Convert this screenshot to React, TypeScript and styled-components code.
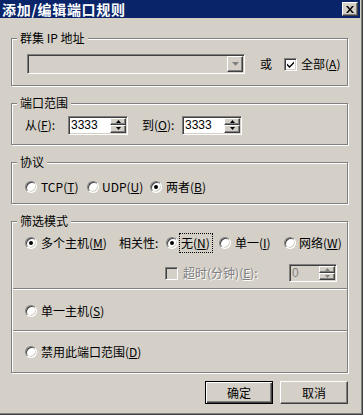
import styled, { createGlobalStyle } from "styled-components";

const face = "#d4d0c8";

const GlobalStyle = createGlobalStyle`
  body {
    margin: 0;
    background: ${face};
    font-family: "Noto Sans CJK SC", "Liberation Sans", sans-serif;
    font-size: 12px;
    color: #000;
  }
`;

const Window = styled.div`
  width: 363px;
  height: 415px;
  box-sizing: border-box;
  background: ${face};
  border-right: 1px solid #404040;
  border-bottom: 1px solid #404040;
  box-shadow: inset -1px -1px 0 #808080;
  display: flex;
  flex-direction: column;
`;

const TitleBar = styled.div`
  height: 18px;
  width: 360px;
  background: #0a246a;
  display: flex;
  align-items: center;
  justify-content: space-between;
  padding: 0 2px 0 2px;
  box-sizing: border-box;
`;

const Title = styled.span`
  color: #fff;
  font-weight: bold;
  font-size: 14px;
  line-height: 18px;
  letter-spacing: 0.7px;
`;

const CloseButton = styled.div`
  width: 16px;
  height: 14px;
  box-sizing: border-box;
  background: ${face};
  border: 1px solid;
  border-color: #fff #404040 #404040 #fff;
  box-shadow: inset -1px -1px 0 #808080;
  display: flex;
  align-items: center;
  justify-content: center;
`;

const Body = styled.div`
  padding: 20px 14px 0 11px;
  display: flex;
  flex-direction: column;
  gap: 17px;
`;

const Group = styled.div<{ $h: number }>`
  position: relative;
  height: ${(p) => p.$h}px;
  box-sizing: border-box;
  border: 1px solid #808080;
  box-shadow: inset 1px 1px 0 #fff, 1px 1px 0 #fff;
`;

const Legend = styled.span`
  position: absolute;
  top: -8px;
  left: 5px;
  padding: 0 3px;
  background: ${face};
  line-height: 14px;
`;

const Row = styled.div<{ $top?: number; $left?: number }>`
  display: flex;
  align-items: center;
  padding-top: ${(p) => p.$top ?? 0}px;
  padding-left: ${(p) => p.$left ?? 13}px;
  height: 20px;
`;

const Sunken = styled.div<{ $w: number; $h: number; $bg?: string }>`
  width: ${(p) => p.$w}px;
  height: ${(p) => p.$h}px;
  box-sizing: border-box;
  border: 1px solid;
  border-color: #808080 #fff #fff #808080;
  box-shadow: inset 1px 1px 0 #404040, inset -1px -1px 0 ${face};
  background: ${(p) => p.$bg ?? "#fff"};
  display: flex;
  align-items: stretch;
  padding: 1px;
`;

const FieldText = styled.span<{ $disabled?: boolean }>`
  flex: 1;
  font-family: "Liberation Sans", Arial, sans-serif;
  font-size: 12px;
  line-height: 14px;
  padding-left: 1px;
  color: ${(p) => (p.$disabled ? "#808080" : "#000")};
`;

const RaisedBox = styled.div<{ $w: number }>`
  width: ${(p) => p.$w}px;
  box-sizing: border-box;
  background: ${face};
  border: 1px solid;
  border-color: #fff #404040 #404040 #fff;
  box-shadow: inset -1px -1px 0 #808080;
  display: flex;
  align-items: center;
  justify-content: center;
`;

const SpinCol = styled.div`
  display: flex;
  flex-direction: column;
  width: 16px;
`;

const SpinHalf = styled(RaisedBox)`
  flex: 1;
`;

const Label = styled.span<{ $w?: number; $ml?: number; $disabled?: boolean }>`
  display: inline-block;
  width: ${(p) => (p.$w ? `${p.$w}px` : "auto")};
  margin-left: ${(p) => p.$ml ?? 0}px;
  white-space: nowrap;
  line-height: 14px;
  flex-shrink: 0;
  color: ${(p) => (p.$disabled ? "#808080" : "#000")};
  text-shadow: ${(p) => (p.$disabled ? "1px 1px 0 #fff" : "none")};
`;

const Focus = styled.span`
  display: inline-block;
  width: 31px;
  margin-right: 7px;
  outline: 1px dotted #000;
  padding: 2px 0 2px 1px;
  line-height: 14px;
  white-space: nowrap;
`;

const RadioCircle = styled.span<{ $mr?: number }>`
  width: 12px;
  height: 12px;
  box-sizing: border-box;
  margin-right: ${(p) => p.$mr ?? 4}px;
  border-radius: 50%;
  border: 1px solid;
  border-color: #808080 #fff #fff #808080;
  box-shadow: inset 1px 1px 0 #404040, inset -1px -1px 0 ${face};
  background: #fff;
  display: flex;
  align-items: center;
  justify-content: center;
  flex-shrink: 0;
`;

const Dot = styled.span`
  width: 4px;
  height: 4px;
  border-radius: 50%;
  background: #000;
`;

const CheckBox = styled.span<{ $ml?: number; $disabled?: boolean }>`
  width: 13px;
  height: 13px;
  box-sizing: border-box;
  margin-left: ${(p) => p.$ml ?? 0}px;
  margin-right: ${(p) => (p.$disabled ? 5 : 4)}px;
  border: 1px solid;
  border-color: #808080 #fff #fff #808080;
  box-shadow: inset 1px 1px 0 #404040, inset -1px -1px 0 ${face};
  background: ${(p) => (p.$disabled ? face : "#fff")};
  display: flex;
  align-items: center;
  justify-content: center;
  flex-shrink: 0;
`;

const Section = styled.div<{ $h: number }>`
  height: ${(p) => p.$h}px;
  display: flex;
  flex-direction: column;
`;

const Divider = styled.div`
  height: 1px;
  background: #808080;
  border-bottom: 1px solid #fff;
  margin-left: 1px;
`;

const Buttons = styled.div`
  display: flex;
  justify-content: flex-end;
  gap: 7px;
  padding: 8px 14px 0 0;
`;

const Button = styled.div<{ $default?: boolean }>`
  width: 68px;
  height: 23px;
  box-sizing: border-box;
  background: ${face};
  border: 1px solid;
  border-color: ${(p) => (p.$default ? "#000" : "#fff #404040 #404040 #fff")};
  box-shadow: ${(p) =>
    p.$default
      ? "inset 1px 1px 0 #fff, inset -1px -1px 0 #404040, inset -2px -2px 0 #808080"
      : "inset -1px -1px 0 #808080"};
  display: flex;
  align-items: center;
  justify-content: center;
  font-size: 12px;
`;

const Radio = ({ on, mr }: { on?: boolean; mr?: number }) => (
  <RadioCircle $mr={mr}>{on && <Dot />}</RadioCircle>
);

const Acc = ({ k }: { k: string }) => (
  <>
    (<u>{k}</u>)
  </>
);

const Spinner = ({ w, h, value, disabled }: { w: number; h: number; value: string; disabled?: boolean }) => (
  <Sunken $w={w} $h={h} $bg={disabled ? face : "#fff"}>
    <FieldText $disabled={disabled}>{value}</FieldText>
    <SpinCol>
      <SpinHalf $w={16}>
        <svg width="5" height="3" viewBox="0 0 5 3">
          <path d="M2.5 0 L5 3 L0 3 Z" fill={disabled ? "#808080" : "#000"} />
        </svg>
      </SpinHalf>
      <SpinHalf $w={16}>
        <svg width="5" height="3" viewBox="0 0 5 3">
          <path d="M0 0 L5 0 L2.5 3 Z" fill={disabled ? "#808080" : "#000"} />
        </svg>
      </SpinHalf>
    </SpinCol>
  </Sunken>
);

export default function App() {
  return (
    <>
      <GlobalStyle />
      <Window>
        <TitleBar>
          <Title>添加/编辑端口规则</Title>
          <CloseButton>
            <svg width="8" height="7" viewBox="0 0 8 7">
              <path d="M0 0 L2 0 L4 2.5 L6 0 L8 0 L5 3.5 L8 7 L6 7 L4 4.5 L2 7 L0 7 L3 3.5 Z" fill="#000" />
            </svg>
          </CloseButton>
        </TitleBar>

        <Body>
          <Group $h={48}>
            <Legend>群集 IP 地址</Legend>
            <Row $top={15} $left={15}>
              <Sunken $w={218} $h={20} $bg={face}>
                <FieldText />
                <RaisedBox $w={16}>
                  <svg width="7" height="5" viewBox="0 0 7 5">
                    <path d="M1 1 L6 1 L3.5 4 Z" fill="#fff" />
                    <path d="M0 0 L7 0 L3.5 4 Z" fill="#808080" />
                  </svg>
                </RaisedBox>
              </Sunken>
              <Label $ml={15}>或</Label>
              <CheckBox $ml={12}>
                <svg width="9" height="9" viewBox="0 0 9 9">
                  <path d="M1 3.5 L3.5 6 L8 1.5 L8 3.5 L3.5 8 L1 5.5 Z" fill="#000" />
                </svg>
              </CheckBox>
              <Label>
                全部<Acc k="A" />
              </Label>
            </Row>
          </Group>

          <Group $h={42}>
            <Legend>端口范围</Legend>
            <Row $top={11}>
              <Label $w={43}>
                从<Acc k="F" />:
              </Label>
              <Spinner w={60} h={19} value="3333" />
              <Label $w={40} $ml={14}>
                到<Acc k="O" />:
              </Label>
              <Spinner w={60} h={19} value="3333" />
            </Row>
          </Group>

          <Group $h={42}>
            <Legend>协议</Legend>
            <Row $top={14}>
              <Radio />
              <Label $w={46}>
                TCP<Acc k="T" />
              </Label>
              <Radio mr={3} />
              <Label $w={48}>
                UDP<Acc k="U" />
              </Label>
              <Radio on />
              <Label>
                两者<Acc k="B" />
              </Label>
            </Row>
          </Group>

          <Group $h={152}>
            <Legend>筛选模式</Legend>
            <Section $h={66}>
              <Row $top={11}>
                <Radio on />
                <Label $w={78}>
                  多个主机<Acc k="M" />
                </Label>
                <Label $w={47}>相关性:</Label>
                <Radio on mr={2} />
                <Focus>
                  无<Acc k="N" />
                </Focus>
                <Radio />
                <Label $w={49}>
                  单一<Acc k="I" />
                </Label>
                <Radio mr={3} />
                <Label>
                  网络<Acc k="W" />
                </Label>
              </Row>
              <Row $top={10} $left={153}>
                <CheckBox $disabled />
                <Label $w={106} $disabled>
                  超时(分钟)<Acc k="E" />:
                </Label>
                <Spinner w={48} h={18} value="0" disabled />
              </Row>
            </Section>
            <Divider />
            <Section $h={40}>
              <Row $top={11}>
                <Radio />
                <Label>
                  单一主机<Acc k="S" />
                </Label>
              </Row>
            </Section>
            <Divider />
            <Section $h={40}>
              <Row $top={10}>
                <Radio />
                <Label>
                  禁用此端口范围<Acc k="D" />
                </Label>
              </Row>
            </Section>
          </Group>
        </Body>

        <Buttons>
          <Button $default>确定</Button>
          <Button>取消</Button>
        </Buttons>
      </Window>
    </>
  );
}
